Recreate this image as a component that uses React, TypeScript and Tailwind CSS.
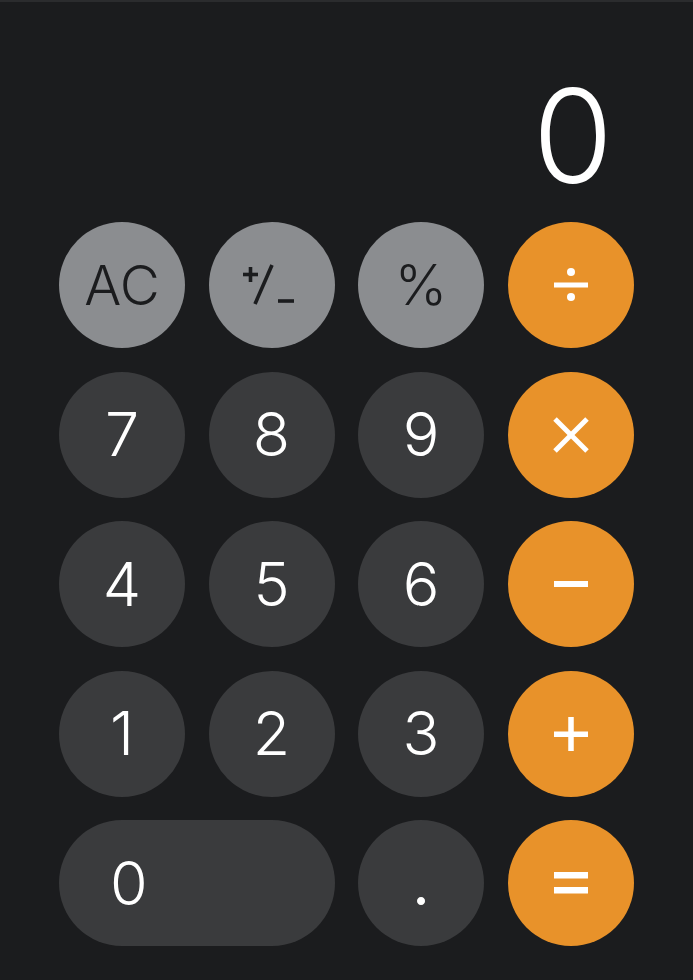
import React from "react";

type Kind = "digit" | "fn" | "op";

const base =
  "h-[126px] rounded-full flex items-center justify-center select-none leading-none";

const kindClass: Record<Kind, string> = {
  digit: "bg-[#3a3b3d] text-white",
  fn: "bg-[#8b8d90] text-[#1b1c1e]",
  op: "bg-[#e8922a] text-white",
};

function Key({
  kind,
  children,
  className = "",
}: {
  kind: Kind;
  children: React.ReactNode;
  className?: string;
}) {
  return (
    <button type="button" className={`${base} ${kindClass[kind]} ${className}`}>
      {children}
    </button>
  );
}

function Digit({ d }: { d: string }) {
  return (
    <Key kind="digit">
      <span className="text-[61px] font-light">{d}</span>
    </Key>
  );
}

// operator glyphs, drawn in a 126x126 box centred on the key
function OpIcon({ op }: { op: "div" | "mul" | "sub" | "add" | "eq" }) {
  return (
    <svg width="126" height="126" viewBox="0 0 126 126" fill="none">
      {op === "div" && (
        <g fill="#fff">
          <rect x="46" y="60.5" width="34" height="5" />
          <circle cx="63" cy="50" r="4" />
          <circle cx="63" cy="75" r="4" />
        </g>
      )}
      {op === "mul" && (
        <g stroke="#fff" strokeWidth="5" strokeLinecap="butt">
          <line x1="47" y1="47" x2="79" y2="79" />
          <line x1="79" y1="47" x2="47" y2="79" />
        </g>
      )}
      {op === "sub" && <rect x="46" y="60" width="34" height="6" fill="#fff" />}
      {op === "add" && (
        <g fill="#fff">
          <rect x="46" y="60.5" width="34" height="5.5" />
          <rect x="60.25" y="46" width="5.5" height="34" />
        </g>
      )}
      {op === "eq" && (
        <g fill="#fff">
          <rect x="46" y="52" width="34" height="6.5" />
          <rect x="46" y="67" width="34" height="6.5" />
        </g>
      )}
    </svg>
  );
}

function PlusMinus() {
  return (
    <svg width="126" height="126" viewBox="0 0 126 126" fill="none">
      <g stroke="#1b1c1e" strokeWidth="3.6">
        <line x1="34" y1="52.5" x2="49" y2="52.5" />
        <line x1="41.5" y1="45" x2="41.5" y2="60" />
        <line x1="46" y1="82" x2="63" y2="43" />
        <line x1="69" y1="79" x2="85" y2="79" />
      </g>
    </svg>
  );
}

export default function App() {
  return (
    <div className="w-[693px] h-[980px] bg-[#1b1c1e] border-t-2 border-[#2b2c2e] font-['Inter','Noto_Sans',sans-serif] overflow-hidden">
      <div className="pt-[69px]">
        <div className="h-[130px] flex justify-end pr-[80px]">
          <span className="text-[130px] leading-none font-light text-white">0</span>
        </div>
        <div className="mt-[21px] pl-[59px] grid grid-cols-[repeat(4,126px)] gap-[23.5px]">
          <Key kind="fn">
            <span className="text-[55px] font-light">AC</span>
          </Key>
          <Key kind="fn">
            <PlusMinus />
          </Key>
          <Key kind="fn">
            <span className="text-[56px] font-light">%</span>
          </Key>
          <Key kind="op">
            <OpIcon op="div" />
          </Key>

          <Digit d="7" />
          <Digit d="8" />
          <Digit d="9" />
          <Key kind="op">
            <OpIcon op="mul" />
          </Key>

          <Digit d="4" />
          <Digit d="5" />
          <Digit d="6" />
          <Key kind="op">
            <OpIcon op="sub" />
          </Key>

          <Digit d="1" />
          <Digit d="2" />
          <Digit d="3" />
          <Key kind="op">
            <OpIcon op="add" />
          </Key>

          <Key kind="digit" className="col-span-2 !justify-start pl-[51px]">
            <span className="text-[61px] font-light">0</span>
          </Key>
          <Key kind="digit">
            <span className="text-[61px] font-normal">.</span>
          </Key>
          <Key kind="op">
            <OpIcon op="eq" />
          </Key>
        </div>
      </div>
    </div>
  );
}
